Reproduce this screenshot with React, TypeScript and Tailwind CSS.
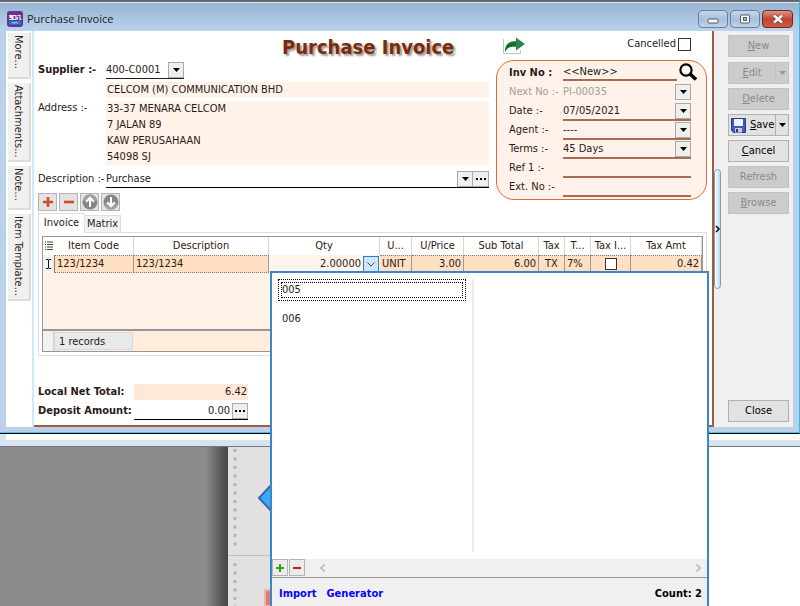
import React from 'react';

function Caret({ className = 'text-black' }: { className?: string }) {
  return (
    <svg viewBox="0 0 7 4" className={`h-1 w-[7px] ${className}`} aria-hidden="true">
      <path d="M0 0h7L3.5 4z" fill="currentColor" />
    </svg>
  );
}

function Dots() {
  return (
    <svg viewBox="0 0 10 2" className="h-0.5 w-[10px]" aria-hidden="true">
      <path d="M0 0h2v2H0zM4 0h2v2H4zM8 0h2v2H8z" fill="#000" />
    </svg>
  );
}

function Combo({ id, value, options }: { id: string; value: string; options: string[] }) {
  return (
    <div className="relative h-4 w-full">
      <select id={id} defaultValue={value} className="block h-4 w-full appearance-none bg-transparent pr-4 leading-4 outline-none">
        {options.map((o) => (
          <option key={o}>{o}</option>
        ))}
      </select>
      <span className="pointer-events-none absolute inset-y-0 right-0 flex w-4 items-center justify-center border border-[#a9a9a9] bg-[#efefef]">
        <Caret />
      </span>
    </div>
  );
}

function SideTab({ label, className }: { label: string; className: string }) {
  return (
    <button type="button" className={`flex w-[23px] items-start border-r-2 border-b-2 border-[#dcdcdc] bg-[#f0f0f0] pt-0.5 ${className}`}>
      <span className="leading-[21px] whitespace-nowrap [writing-mode:vertical-rl]">{label}</span>
    </button>
  );
}

function InfoRow({ id, label, children, line = true, strong = false, dim = false }: {
  id: string; label: string; children: React.ReactNode; line?: boolean; strong?: boolean; dim?: boolean;
}) {
  return (
    <div className={`flex h-[19px] items-end ${dim ? 'text-[#a39c98]' : ''}`}>
      <label htmlFor={id} className={`w-[54px] shrink-0 pb-0.5 leading-4 whitespace-nowrap ${strong ? 'font-bold' : ''}`}>{label}</label>
      <div className={`min-w-0 flex-1 border-b-2 ${line ? 'border-[#a96b54]' : 'border-transparent'}`}>{children}</div>
    </div>
  );
}

function ActionButton({ label, disabled = false, underline = true, className = '' }: {
  label: string; disabled?: boolean; underline?: boolean; className?: string;
}) {
  return (
    <button
      type="button"
      disabled={disabled}
      className={`h-[22px] w-full border ${disabled ? 'border-[#c3c3c3] bg-[#cccccc] text-[#8a8a8a]' : 'border-[#b0b0b0] bg-[#e2e2e2] text-black'} ${className}`}
    >
      {underline ? (<><u>{label[0]}</u>{label.slice(1)}</>) : label}
    </button>
  );
}

function RoundArrow({ down = false }: { down?: boolean }) {
  return (
    <svg viewBox="0 0 16 16" className={`h-4 w-4 ${down ? 'rotate-180' : ''}`} aria-hidden="true">
      <circle cx="8" cy="8" r="7.5" fill="#858585" />
      <path d="M1 6a7.2 7.2 0 0 1 14 0q-7 3-14 0z" fill="#a1a1a1" />
      <path d="M8 13V4M4.2 7.7 8 3.8l3.800 3.900" fill="none" stroke="#fff" strokeWidth="2" />
    </svg>
  );
}

function Sign({ plus = false, color, size }: { plus?: boolean; color: string; size: string }) {
  return (
    <svg viewBox="0 0 10 10" className={size} aria-hidden="true">
      <path d={plus ? 'M5 0v10M0 5h10' : 'M0 5h10'} stroke={color} strokeWidth="2.600" />
    </svg>
  );
}

const toolButton = 'flex h-[18px] w-[19px] items-center justify-center border border-[#b4b4b4] bg-[#e3e3e3]';
const columns = ['Item Code', 'Description', 'Qty', 'U...', 'U/Price', 'Sub Total', 'Tax', 'T...', 'Tax I...', 'Tax Amt'];
const cell = 'border-r border-r-[#9a9a9a] border-y border-y-[#8b7a6b] [border-top-style:dotted] [border-bottom-style:dotted] px-0.5 py-0';

function TitleBar() {
  return (
    <header className="flex h-7 items-center bg-linear-to-b from-[#98b4d2] to-[#bbd3ec] pr-1.5 pl-[7px]">
      <svg viewBox="0 0 16 16" className="mt-1 h-4 w-4" aria-hidden="true">
        <rect width="16" height="16" rx="3" fill="#67348f" />
        <path d="M2 4.500h3v1H3v1h2v2H2M6 4.500h3v4H6zM10.500 4.500h2.500v4h1.500M10.500 8.500V6" fill="none" stroke="#f2e9f7" strokeWidth="1.200" />
        <rect x="2" y="10" width="12" height="3.500" fill="#1685cf" />
        <path d="M5 11.800h6" stroke="#9adcff" />
      </svg>
      <h2 className="mt-1 ml-1 flex-1 font-['Open_Sans','Noto_Sans',sans-serif] text-[11px] text-[#151c26]">Purchase Invoice</h2>
      <div className="mt-1 flex gap-0.5">
        <button type="button" aria-label="Minimize" className="flex h-[18px] w-[30px] items-center justify-center rounded-sm border border-[#66809e] bg-linear-to-b from-[#c5d7ea] via-[#a8c0da] to-[#bdd3eb]">
          <svg viewBox="0 0 12 6" className="mt-1 h-1.5 w-3"><rect x="1" y="1" width="10" height="4" rx="1" fill="#fff" stroke="#4f5966" /></svg>
        </button>
        <button type="button" aria-label="Maximize" className="flex h-[18px] w-[30px] items-center justify-center rounded-sm border border-[#66809e] bg-linear-to-b from-[#c5d7ea] via-[#a8c0da] to-[#bdd3eb]">
          <svg viewBox="0 0 12 10" className="h-[10px] w-3"><rect x="1.500" y="1" width="9" height="8" rx="1" fill="#fff" stroke="#4f5966" /><rect x="4.500" y="3.500" width="3" height="3" fill="#a8c0da" stroke="#4f5966" /></svg>
        </button>
        <button type="button" aria-label="Close window" className="flex h-[18px] w-[31px] items-center justify-center rounded-sm border border-[#6d2a22] bg-linear-to-b from-[#df9284] via-[#c2452c] to-[#cf5b3f]">
          <svg viewBox="0 0 12 10" className="h-[10px] w-3"><path d="M2 1.500l8 7M10 1.500l-8 7" stroke="#5b4a4d" strokeWidth="4" /><path d="M2 1.500l8 7M10 1.500l-8 7" stroke="#fff" strokeWidth="2.400" /></svg>
        </button>
      </div>
    </header>
  );
}

function InvoiceInfo() {
  return (
    <section className="h-[140px] rounded-[18px] border border-[#e0693a] bg-[#fff2ea] pt-[3px] pr-[15px] pl-3">
      <InfoRow id="inv" label="Inv No :" strong line={false}>
        <div className="flex h-4 items-end gap-0.5">
          <input id="inv" defaultValue="<<New>>" className="h-[18px] min-w-0 flex-1 border-b-2 border-[#a96b54] bg-transparent outline-none" />
          <button type="button" aria-label="Search" className="relative -mr-2 h-[18px] w-5">
            <svg viewBox="0 0 18 18" className="h-[18px] w-[18px]"><circle cx="7" cy="7" r="5.600" fill="#fff8f3" stroke="#000" strokeWidth="2.200" /><path d="M11 11l6 5.500" stroke="#000" strokeWidth="3.400" /></svg>
          </button>
        </div>
      </InfoRow>
      <InfoRow id="next" label="Next No :-" line={false} dim><Combo id="next" value="PI-00035" options={['PI-00035']} /></InfoRow>
      <InfoRow id="date" label="Date :-"><Combo id="date" value="07/05/2021" options={['07/05/2021']} /></InfoRow>
      <InfoRow id="agent" label="Agent :-"><Combo id="agent" value="----" options={['----']} /></InfoRow>
      <InfoRow id="terms" label="Terms :-"><Combo id="terms" value="45 Days" options={['45 Days']} /></InfoRow>
      <InfoRow id="ref" label="Ref 1 :-"><input id="ref" className="block h-4 w-full bg-transparent outline-none" /></InfoRow>
      <InfoRow id="ext" label="Ext. No :-"><input id="ext" className="block h-4 w-full bg-transparent outline-none" /></InfoRow>
    </section>
  );
}

function ItemGrid() {
  return (
    <div className="border border-t-0 border-[#dedede] p-[3px]">
      <div className="border border-[#969696] bg-[#fff2e9]">
        <table className="w-full table-fixed border-separate border-spacing-0 leading-4">
          <colgroup>
            <col className="w-[11px]" /><col className="w-[80px]" /><col className="w-[135px]" /><col className="w-[111px]" />
            <col className="w-8" /><col className="w-[52px]" /><col className="w-[75px]" /><col className="w-[26px]" />
            <col className="w-[26px]" /><col className="w-10" /><col />
          </colgroup>
          <thead>
            <tr className="h-[18px] bg-white">
              <th className="p-0" aria-label="Columns">
                <svg viewBox="0 0 8 10" className="mx-auto h-[10px] w-2"><path d="M0 1h1M2 1h6M0 3.500h1M2 3.500h6M0 6h1M2 6h6M0 8.500h1M2 8.500h6" stroke="#4c3c34" /></svg>
              </th>
              {columns.map((c) => (
                <th key={c} className="border-r border-[#d6d6d6] p-0 text-center font-normal whitespace-nowrap">{c}</th>
              ))}
            </tr>
          </thead>
          <tbody>
            <tr className="h-[18px] bg-[#ffe0c2]">
              <td className="bg-[#f2f2f2] p-0">
                <svg viewBox="0 0 7 10" className="mx-auto h-[10px] w-[7px]"><path d="M1 .5h2l.5.5.5-.5h2M3.500 1v8M1 9.500h2l.5-.5.5.5h2" fill="none" stroke="#111" /></svg>
              </td>
              <td className={`${cell} border-l border-l-[#8b7a6b]`}>123/1234</td>
              <td className={cell}>123/1234</td>
              <td className="bg-[#fff5ee] p-0">
                <div className="flex items-center justify-end gap-0.5 pr-px">
                  <span>2.00000</span>
                  <button type="button" aria-label="Open quantity list" className="flex h-4 w-4 items-center justify-center border border-[#2f7dc0] bg-[#cfe5f7]">
                    <svg viewBox="0 0 8 5" className="h-[5px] w-2"><path d="M.5.5 4 4l3.500-3.500" fill="none" stroke="#3e4c5c" /></svg>
                  </button>
                </div>
              </td>
              <td className={cell}>UNIT</td>
              <td className={`${cell} text-right`}>3.00</td>
              <td className={`${cell} text-right`}>6.00</td>
              <td className={`${cell} text-center`}>TX</td>
              <td className={cell}>7%</td>
              <td className={`${cell} text-center`}>
                <input type="checkbox" aria-label="Tax inclusive" className="mx-auto block h-3 w-3 appearance-none border border-[#333] bg-white" />
              </td>
              <td className={`${cell} text-right`}>0.42</td>
            </tr>
          </tbody>
        </table>
        <div className="h-14" />
        <div className="flex h-[22px] border-t-2 border-[#969696] bg-[#ffecda]">
          <div className="w-[11px] border-r border-[#d0d0d0] bg-[#f2f2f2]" />
          <div className="my-px w-[79px] border border-[#d7dadb] bg-[#e6eaea] pl-1 leading-[17px]">1 records</div>
        </div>
      </div>
    </div>
  );
}

function InvoiceForm() {
  return (
    <main className="min-w-0 flex-1 border-r-2 border-b-2 border-[#a15c46] bg-white pr-[5px] pl-1 text-[#2b1a17]">
      <div className="flex h-[29px] items-start">
        <h1 className="flex-1 pt-1 pr-12 text-right text-[20px] leading-6 font-bold text-[#7b2b0a] [text-shadow:2px_2px_2px_#999]">Purchase Invoice</h1>
        <button type="button" aria-label="Share" className="mt-[6px] h-[18px] w-6">
          <svg viewBox="0 0 24 18" className="h-[18px] w-6"><path d="M1.500 2v14.500h17V13" fill="none" stroke="#b4cdbd" /><path d="M3 15C3 7 7 4 14 4V.5L23 7l-9 6.500V9.500C8 9 5 10.500 3 15z" fill="#278a49" /><path d="M3 15C3 8 8 5 14 5v4.500C8 9 5 10.500 3 15z" fill="#1b6636" /></svg>
        </button>
        <label className="mt-[5px] mr-4 ml-[101px] flex items-center gap-0.5 leading-4">Cancelled
          <input type="checkbox" className="h-[13px] w-[13px] appearance-none border border-[#333] bg-white" />
        </label>
      </div>
      <div className="grid grid-cols-[minmax(0,1fr)_211px] gap-[7px]">
        <section>
          <div className="flex h-[22px] items-start pt-0.5">
            <label htmlFor="supplier" className="w-[68px] font-bold leading-4">Supplier :-</label>
            <div className="w-[78px] border-b border-[#2b1a17]"><Combo id="supplier" value="400-C0001" options={['400-C0001']} /></div>
          </div>
          <div className="ml-[68px] h-4 bg-[#fff2e9] pl-px leading-4">CELCOM (M) COMMUNICATION BHD</div>
          <div className="mt-[3px] flex">
            <span className="w-[68px] shrink-0 pt-px leading-3">Address :-</span>
            <address className="h-16 flex-1 bg-[#fff2e9] pl-px leading-4 not-italic">33-37 MENARA CELCOM<br />7 JALAN 89<br />KAW PERUSAHAAN<br />54098 SJ</address>
          </div>
          <div className="mt-1.5 flex h-[17px]">
            <label htmlFor="description" className="w-[68px] shrink-0 leading-4 whitespace-nowrap">Description :-</label>
            <div className="flex flex-1 border-b border-black">
              <input id="description" defaultValue="Purchase" className="min-w-0 flex-1 bg-transparent outline-none" />
              <button type="button" aria-label="Choose description" className="flex h-4 w-4 items-center justify-center border border-[#a9a9a9] bg-[#efefef]"><Caret /></button>
              <button type="button" aria-label="Edit description" className="flex h-4 w-4 items-center justify-center border border-l-0 border-[#a9a9a9] bg-[#efefef]"><Dots /></button>
            </div>
          </div>
          <div className="mt-1 flex gap-0.5 pt-px pb-0.5">
            <button type="button" aria-label="Add row" className={toolButton}><Sign plus color="#d24a2f" size="h-[10px] w-[10px]" /></button>
            <button type="button" aria-label="Remove row" className={toolButton}><Sign color="#d24a2f" size="h-[10px] w-[10px]" /></button>
            <button type="button" aria-label="Move up" className={toolButton}><RoundArrow /></button>
            <button type="button" aria-label="Move down" className={toolButton}><RoundArrow down /></button>
          </div>
        </section>
        <InvoiceInfo />
      </div>
      <div className="flex items-end">
        <button type="button" className="h-5 w-[47px] border border-b-0 border-[#dedede] bg-white">Invoice</button>
        <button type="button" className="h-[18px] w-9 border border-l-0 border-[#dedede] bg-[#f2f2f2]">Matrix</button>
        <div className="flex-1 border-b border-[#dedede]" />
      </div>
      <ItemGrid />
      <div className="mt-7 grid w-[210px] grid-cols-[96px_minmax(0,1fr)] gap-y-[3px] leading-4">
        <span className="font-bold whitespace-nowrap">Local Net Total:</span>
        <output className="bg-[#ffe8da] pr-px text-right">6.42</output>
        <label htmlFor="deposit" className="font-bold whitespace-nowrap">Deposit Amount:</label>
        <div className="flex h-[17px] border-b border-black">
          <input id="deposit" defaultValue="0.00" className="min-w-0 flex-1 bg-transparent pr-0.5 text-right outline-none" />
          <button type="button" aria-label="Edit deposit" className="flex h-4 w-4 items-center justify-center border border-[#a9a9a9] bg-[#efefef]"><Dots /></button>
        </div>
      </div>
    </main>
  );
}

function ActionPanel() {
  return (
    <aside className="flex w-[79px] bg-[#f0f0f0]">
      <button type="button" aria-label="Collapse panel" className="mt-[138px] flex h-[120px] w-[7px] shrink-0 items-center rounded-sm border border-[#8c9aa5] bg-linear-to-r from-white to-[#b7dcee]">
        <svg viewBox="0 0 5 8" className="h-2 w-[5px]"><path d="M1 1l3 3-3 3" fill="none" stroke="#000" strokeWidth="1.500" /></svg>
      </button>
      <div className="flex flex-1 flex-col gap-1 pt-1 pr-1 pb-[5px] pl-[7px]">
        <ActionButton label="New" disabled />
        <div className="mt-px flex h-[22px]">
          <ActionButton label="Edit" disabled />
          <button type="button" disabled aria-label="Edit options" className="flex w-[13px] shrink-0 items-center justify-center border border-l-0 border-[#c3c3c3] bg-[#cccccc]"><Caret className="text-[#999]" /></button>
        </div>
        <ActionButton label="Delete" disabled />
        <div className="flex h-[22px]">
          <button type="button" className="flex flex-1 items-center gap-1 border border-[#b0b0b0] bg-[#e2e2e2] pl-[2px] text-black">
            <svg viewBox="0 0 15 15" className="h-[15px] w-[15px]" aria-hidden="true"><path d="M.5.5h14v14h-12l-2-2z" fill="#4258ba" stroke="#273c8b" /><path d="M3 1h9v7H3z" fill="#eef2fc" /><path d="M4 10h7v4.500H4z" fill="#c7cce0" /><path d="M5 11h2v3H5z" fill="#28356f" /></svg>
            <span><u>S</u>ave</span>
          </button>
          <button type="button" aria-label="Save options" className="flex w-[13px] items-center justify-center border border-l-0 border-[#b0b0b0] bg-[#e2e2e2]"><Caret /></button>
        </div>
        <ActionButton label="Cancel" />
        <ActionButton label="Refresh" disabled underline={false} />
        <ActionButton label="Browse" disabled />
        <ActionButton label="Close" underline={false} className="mt-auto" />
      </div>
    </aside>
  );
}

function QuantityPopup() {
  return (
    <section className="absolute top-[271px] right-[91px] bottom-0 left-[270px] flex flex-col border-x-2 border-t-2 border-[#3b86c6] bg-white text-[#1c1c1c]">
      <div className="flex flex-1 pt-1.5 pb-[7px] pl-1.5">
        <div className="w-[188px]">
          <button type="button" className="block h-[22px] w-full border border-dotted border-black p-0.5 text-left"><span className="block h-4 border border-dotted border-black leading-[14px]">005</span></button>
          <button type="button" className="mt-2 block h-5 px-1 text-left leading-5">006</button>
        </div>
        <div className="ml-[6px] w-0.5 bg-[#ededed]" />
      </div>
      <div className="flex h-[19px] gap-px border-b border-[#969696] bg-[#f0f0f0]">
        <button type="button" aria-label="Add" className="flex h-[17px] w-4 items-center justify-center border border-[#b4b4b4] bg-[#ececec]"><Sign plus color="#35a01b" size="h-2 w-2" /></button>
        <button type="button" aria-label="Remove" className="flex h-[17px] w-4 items-center justify-center border border-[#b4b4b4] bg-[#ececec]"><Sign color="#c02228" size="h-2 w-2" /></button>
        <div className="flex flex-1 items-center justify-between pr-1.5 pl-3.5 text-[#b5b5b5]">
          <svg viewBox="0 0 5 8" className="h-2 w-[5px]"><path d="M4.500.5 1 4l3.500 3.500" fill="none" stroke="currentColor" strokeWidth="1.500" /></svg>
          <svg viewBox="0 0 5 8" className="h-2 w-[5px]"><path d="M.5.5 4 4 .5 7.500" fill="none" stroke="currentColor" strokeWidth="1.500" /></svg>
        </div>
      </div>
      <footer className="flex h-7 gap-[10px] bg-[#f0f0f0] pt-2 pr-[5px] pl-[7px] leading-4 font-bold">
        <a href="#import" className="text-[#0505ff]">Import</a>
        <a href="#generator" className="flex-1 text-[#0505ff]">Generator</a>
        <span className="text-black">Count: 2</span>
      </footer>
    </section>
  );
}

export default function App() {
  return (
    <div className="relative flex min-h-screen flex-col overflow-hidden bg-white font-['DejaVu_Sans_Condensed','Noto_Sans',sans-serif] text-[11px]">
      <div className="border-t-2 border-r border-b border-t-[#666] border-r-[#34bde0] border-b-black bg-[#bbd1ea]">
        <div className="border-t border-b border-t-[#dceafa] border-b-[#3fc6e6]">
          <TitleBar />
          <div className="flex h-[396px] pr-1.5 pl-1.5">
            <nav aria-label="Sections" className="flex w-[28px] flex-col gap-1 border-r-2 border-[#d0e8fb] bg-white pt-0.5 pl-[2px] text-[#2b1a17]">
              <SideTab label="More..." className="h-[46px]" />
              <SideTab label="Attachments..." className="h-[79px]" />
              <SideTab label="Note..." className="h-11" />
              <SideTab label="Item Template..." className="h-[87px]" />
            </nav>
            <InvoiceForm />
            <ActionPanel />
          </div>
          <div className="h-[5px]" />
        </div>
      </div>
      <div className="h-[13px] border-b border-[#777] bg-[#d7e3f1] pl-1.5"><div className="h-1.5 bg-[#fffaf4]" /></div>
      <div className="flex flex-1">
        <div className="w-[228px] bg-linear-to-r from-[#8c8c8c] from-90% to-[#454545]" />
        <svg viewBox="0 0 60 159" preserveAspectRatio="xMinYMin slice" className="h-[159px] w-[60px] bg-[#e2e0e1]" aria-hidden="true">
          <path d="M7 2v102M7 116v43" stroke="#b4b4b4" strokeWidth="3" strokeDasharray="3 5.500" />
          <path d="M0 108.500h60" stroke="#c3c1c2" />
          <path d="M31 51 46 35v32z" fill="#36aaf5" stroke="#3c64a9" strokeWidth="2" />
          <path d="M37 143h12v16H37z" fill="#e37b73" stroke="#efb3ae" strokeWidth="2" />
        </svg>
      </div>
      <QuantityPopup />
    </div>
  );
}
